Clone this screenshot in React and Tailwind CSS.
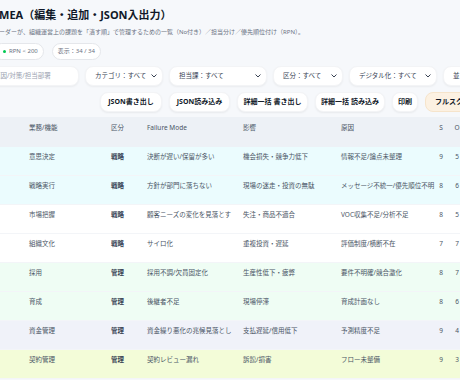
const rows = [
	{ fn: "意思決定", kubun: "戦略", fm: "決断が遅い/保留が多い", eff: "機会損失・競争力低下", cause: "情報不足/論点未整理", s: 9, o: 5, bg: "bg-[#ebfcfe]" },
	{ fn: "戦略実行", kubun: "戦略", fm: "方針が部門に落ちない", eff: "現場の迷走・投資の無駄", cause: "メッセージ不統一/優先順位不明", s: 8, o: 6, bg: "bg-[#ebfcfe]" },
	{ fn: "市場把握", kubun: "戦略", fm: "顧客ニーズの変化を見落とす", eff: "失注・商品不適合", cause: "VOC収集不足/分析不足", s: 8, o: 5, bg: "bg-white" },
	{ fn: "組織文化", kubun: "戦略", fm: "サイロ化", eff: "重複投資・遅延", cause: "評価制度/横断不在", s: 7, o: 7, bg: "bg-white" },
	{ fn: "採用", kubun: "管理", fm: "採用不調/欠員固定化", eff: "生産性低下・疲弊", cause: "要件不明確/競合激化", s: 8, o: 7, bg: "bg-[#effdf4]" },
	{ fn: "育成", kubun: "管理", fm: "後継者不足", eff: "現場停滞", cause: "育成計画なし", s: 8, o: 6, bg: "bg-[#effdf4]" },
	{ fn: "資金管理", kubun: "管理", fm: "資金繰り悪化の兆候見落とし", eff: "支払遅延/信用低下", cause: "予測精度不足", s: 9, o: 4, bg: "bg-[#f0f2f9]" },
	{ fn: "契約管理", kubun: "管理", fm: "契約レビュー漏れ", eff: "訴訟/損害", cause: "フロー未整備", s: 9, o: 3, bg: "bg-[#f3fcd8]" },
];

const selects = [
	{ label: "カテゴリ：すべて", w: "w-[78px]" },
	{ label: "担当課：すべて", w: "w-[98px]" },
	{ label: "区分：すべて", w: "w-[70px]" },
	{ label: "デジタル化：すべて", w: "w-[88px]" },
	{ label: "並び順：RPN高い順", w: "w-[90px]" },
];

const buttons = [
	{ label: "JSON書き出し", w: "w-[62px]" },
	{ label: "JSON読み込み", w: "w-[61px]" },
	{ label: "詳細一括 書き出し", w: "w-[71px]" },
	{ label: "詳細一括 読み込み", w: "w-[70px]" },
	{ label: "印刷", w: "w-[26px]" },
];

function Chevron() {
	return (
		<svg width="6" height="4" viewBox="0 0 6 4" fill="none" className="shrink-0">
			<path d="M0.8 0.8 L3 3 L5.2 0.8" stroke="#374151" strokeWidth="1" strokeLinecap="round" strokeLinejoin="round" />
		</svg>
	);
}

export default function App() {
	return (
		<div className="w-[460px] h-[380px] overflow-hidden bg-[#f6f8fb] font-['Noto_Sans','Noto_Sans_CJK_JP',sans-serif] text-gray-800">
			{/* タイトル */}
			<div className="-ml-[7px] pt-[7px] whitespace-nowrap">
				<h1 className="text-[11px] leading-[16px] font-bold text-gray-900">
					FMEA（編集・追加・JSON入出力）
				</h1>
				<p className="mt-[4px] text-[6px] leading-[10px] text-gray-500">
					リーダーが、組織運営上の課題を「潰す順」で管理するための一覧（No付き）／担当分け／優先順位付け（RPN）。
				</p>
				<div className="mt-[6px] flex gap-[8px]">
					<div className="h-[17px] flex items-center gap-[3px] pl-[9px] pr-[5px] bg-white border border-gray-200 rounded-full text-[6px] text-gray-500">
						<span className="w-[3px] h-[3px] rounded-full bg-green-500"></span>
						RPN &lt; 200
					</div>
					<div className="h-[17px] flex items-center px-[5px] bg-white border border-gray-200 rounded-full text-[6px] text-gray-500">
						表示：34 / 34
					</div>
				</div>
			</div>

			{/* フィルター */}
			<div className="mt-[6px] -ml-[50px] flex gap-[6px] whitespace-nowrap">
				<div className="w-[129px] h-[20px] shrink-0 flex items-center pl-[8px] bg-white rounded-lg shadow-[0_1px_2px_rgba(0,0,0,0.05)] border border-gray-100 text-[6.5px] text-gray-400">
					検索：業務/原因/対策/担当部署
				</div>
				{selects.map((s) => (
					<div
						key={s.label}
						className={`${s.w} h-[20px] shrink-0 flex items-center justify-between pl-[9px] pr-[5px] bg-white rounded-lg shadow-[0_1px_2px_rgba(0,0,0,0.05)] border border-gray-100 text-[6.5px] text-gray-700`}>
						<span>{s.label}</span>
						<Chevron />
					</div>
				))}
			</div>

			{/* ボタン */}
			<div className="mt-[6px] pl-[100px] flex gap-[7px] whitespace-nowrap">
				{buttons.map((b) => (
					<div
						key={b.label}
						className={`${b.w} h-[20px] shrink-0 flex items-center justify-center bg-white rounded-lg shadow-[0_1px_2px_rgba(0,0,0,0.06)] border border-gray-100 text-[7px] font-bold text-gray-900`}>
						{b.label}
					</div>
				))}
				<div className="w-[64px] h-[20px] shrink-0 flex items-center pl-[9px] bg-[#fcf1e2] rounded-lg border border-[#f6e4cb] text-[7px] font-bold text-gray-900">
					フルスクリーン
				</div>
			</div>

			{/* テーブル */}
			<div className="mt-[5px] w-[480px] text-[6.5px] leading-[10px] whitespace-nowrap">
				<div className="h-[30px] flex pt-[6px] bg-[#edf1f6] text-gray-600">
					<div className="w-[111px] shrink-0 pl-[29px]">業務/機能</div>
					<div className="w-[36px] shrink-0">区分</div>
					<div className="w-[96px] shrink-0">Failure Mode</div>
					<div className="w-[98px] shrink-0">影響</div>
					<div className="w-[92px] shrink-0">原因</div>
					<div className="w-[16px] shrink-0 text-center">S</div>
					<div className="w-[16px] shrink-0 text-center">O</div>
				</div>
				{rows.map((r) => (
					<div key={r.fn} className={`h-[29px] flex pt-[5px] border-b border-[#f3f5f8] ${r.bg} text-gray-600`}>
						<div className="w-[111px] shrink-0 pl-[29px]">{r.fn}</div>
						<div className="w-[36px] shrink-0 font-bold text-gray-700">{r.kubun}</div>
						<div className="w-[96px] shrink-0">{r.fm}</div>
						<div className="w-[98px] shrink-0">{r.eff}</div>
						<div className="w-[92px] shrink-0">{r.cause}</div>
						<div className="w-[16px] shrink-0 text-center">{r.s}</div>
						<div className="w-[16px] shrink-0 text-center">{r.o}</div>
					</div>
				))}
			</div>
		</div>
	);
}
